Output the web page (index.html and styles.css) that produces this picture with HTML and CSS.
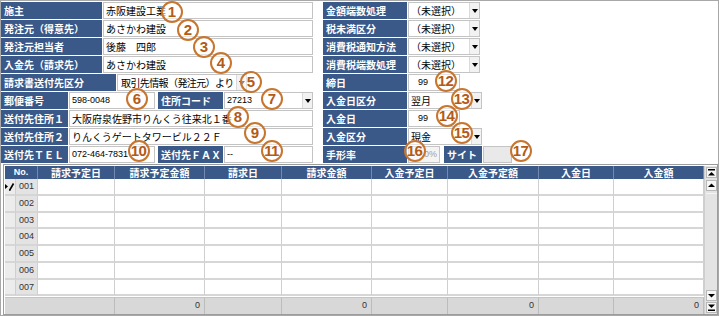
FILE: index.html
```html
<!DOCTYPE html>
<html lang="ja">
<head>
    <meta charset="UTF-8">
    <title>請求先情報</title>
    <link rel="stylesheet" href="styles.css">
</head>
<body>
    <div class="frame">
        <div class="form">
            <div class="col col-left">
                <div class="row">
                    <div class="lbl w101">施主</div>
                    <div class="fld w210">赤阪建設工業</div>
                </div>
                <div class="row">
                    <div class="lbl w101">発注元（得意先）</div>
                    <div class="fld w210">あさかわ建設</div>
                </div>
                <div class="row">
                    <div class="lbl w101">発注元担当者</div>
                    <div class="fld w210">後藤　四郎</div>
                </div>
                <div class="row">
                    <div class="lbl w101">入金先（請求先）</div>
                    <div class="fld w210">あさかわ建設</div>
                </div>
                <div class="row">
                    <div class="lbl w115">請求書送付先区分</div>
                    <div class="fld sel w130 pl3"><span class="val tight">取引先情報（発注元）より</span><span class="arr"></span></div>
                </div>
                <div class="row">
                    <div class="lbl w67">郵便番号</div>
                    <div class="fld num w86">598-0048</div>
                    <div class="lbl w65 ml2">住所コード</div>
                    <div class="fld sel num w89"><span class="val">27213</span><span class="arr"></span></div>
                </div>
                <div class="row">
                    <div class="lbl w67">送付先住所１</div>
                    <div class="fld w244">大阪府泉佐野市りんくう往来北１番</div>
                </div>
                <div class="row">
                    <div class="lbl w67">送付先住所２</div>
                    <div class="fld w244">りんくうゲートタワービル２２Ｆ</div>
                </div>
                <div class="row">
                    <div class="lbl w67">送付先ＴＥＬ</div>
                    <div class="fld num w86">072-464-7831</div>
                    <div class="lbl w65 ml2">送付先ＦＡＸ</div>
                    <div class="fld num w89">--</div>
                </div>
            </div>

            <div class="col col-right">
                <div class="row">
                    <div class="lbl w84">金額端数処理</div>
                    <div class="fld sel w72"><span class="val">（未選択）</span><span class="arr"></span></div>
                </div>
                <div class="row">
                    <div class="lbl w84">税未満区分</div>
                    <div class="fld sel w72"><span class="val">（未選択）</span><span class="arr"></span></div>
                </div>
                <div class="row">
                    <div class="lbl w84">消費税通知方法</div>
                    <div class="fld sel w72"><span class="val">（未選択）</span><span class="arr"></span></div>
                </div>
                <div class="row">
                    <div class="lbl w84">消費税端数処理</div>
                    <div class="fld sel w72"><span class="val">（未選択）</span><span class="arr"></span></div>
                </div>
                <div class="row">
                    <div class="lbl w84">締日</div>
                    <div class="fld num pl9 w52">99</div>
                </div>
                <div class="row">
                    <div class="lbl w84">入金日区分</div>
                    <div class="fld sel w74"><span class="val">翌月</span><span class="arr"></span></div>
                </div>
                <div class="row">
                    <div class="lbl w84">入金日</div>
                    <div class="fld num pl9 w52">99</div>
                </div>
                <div class="row">
                    <div class="lbl w84">入金区分</div>
                    <div class="fld sel w74"><span class="val">現金</span><span class="arr"></span></div>
                </div>
                <div class="row">
                    <div class="lbl w84">手形率</div>
                    <div class="fld num rate w32">0%</div>
                    <div class="lbl w38 ml3">サイト</div>
                    <div class="fld grey w29"></div>
                </div>
            </div>
        </div>

        <div class="grid">
            <div class="table">
                <div class="thead">
                    <div>No.</div>
                    <div>請求予定日</div>
                    <div>請求予定金額</div>
                    <div>請求日</div>
                    <div>請求金額</div>
                    <div>入金予定日</div>
                    <div>入金予定額</div>
                    <div>入金日</div>
                    <div>入金額</div>
                </div>
                <div class="tr">
                    <div class="ind">
                        <svg width="10" height="11" viewBox="0 0 10 11">
                            <path d="M0 3 L3 5.5 L0 8 Z" fill="#000"/>
                            <path d="M4.5 9.5 L8.5 2.5" stroke="#000" stroke-width="1.6"/>
                            <path d="M4 10 L4.3 8.4 L5.4 9.1 Z" fill="#000"/>
                        </svg>
                    </div>
                    <div class="no">001</div><div></div><div></div><div></div><div></div><div></div><div></div><div></div><div></div>
                </div>
                <div class="tr">
                    <div class="ind"></div><div class="no">002</div><div></div><div></div><div></div><div></div><div></div><div></div><div></div><div></div>
                </div>
                <div class="tr">
                    <div class="ind"></div><div class="no">003</div><div></div><div></div><div></div><div></div><div></div><div></div><div></div><div></div>
                </div>
                <div class="tr">
                    <div class="ind"></div><div class="no">004</div><div></div><div></div><div></div><div></div><div></div><div></div><div></div><div></div>
                </div>
                <div class="tr">
                    <div class="ind"></div><div class="no">005</div><div></div><div></div><div></div><div></div><div></div><div></div><div></div><div></div>
                </div>
                <div class="tr">
                    <div class="ind"></div><div class="no">006</div><div></div><div></div><div></div><div></div><div></div><div></div><div></div><div></div>
                </div>
                <div class="tr">
                    <div class="ind"></div><div class="no">007</div><div></div><div></div><div></div><div></div><div></div><div></div><div></div><div></div>
                </div>
                <div class="tfoot">
                    <div></div>
                    <div>0</div>
                    <div></div>
                    <div>0</div>
                    <div></div>
                    <div>0</div>
                    <div></div>
                    <div>0</div>
                </div>
            </div>
            <div class="vscroll">
                <div class="sb">
                    <svg width="7" height="7" viewBox="0 0 7 7"><rect x="0" y="0" width="7" height="1.5" fill="#000"/><path d="M0 6.5 L7 6.5 L3.5 3 Z" fill="#000"/></svg>
                </div>
                <div class="sb up">
                    <svg width="7" height="5" viewBox="0 0 7 5"><path d="M0 4 L7 4 L3.5 0.5 Z" fill="#000"/></svg>
                </div>
                <div class="track"></div>
                <div class="sb">
                    <svg width="7" height="5" viewBox="0 0 7 5"><path d="M0 1 L7 1 L3.5 4.5 Z" fill="#000"/></svg>
                </div>
                <div class="sb last">
                    <svg width="7" height="7" viewBox="0 0 7 7"><path d="M0 0.5 L7 0.5 L3.5 4 Z" fill="#000"/><rect x="0" y="5.5" width="7" height="1.5" fill="#000"/></svg>
                </div>
            </div>
        </div>

        <span class="mark m1">1</span>
        <span class="mark m2">2</span>
        <span class="mark m3">3</span>
        <span class="mark m4">4</span>
        <span class="mark m5">5</span>
        <span class="mark m6">6</span>
        <span class="mark m7">7</span>
        <span class="mark m8">8</span>
        <span class="mark m9">9</span>
        <span class="mark two m10">10</span>
        <span class="mark two m11">11</span>
        <span class="mark two m12">12</span>
        <span class="mark two m13">13</span>
        <span class="mark two m14">14</span>
        <span class="mark two m15">15</span>
        <span class="mark two m16">16</span>
        <span class="mark two m17">17</span>
    </div>
</body>
</html>
```

FILE: styles.css
```css
body {
    margin: 0;
    background: #fff;
    font-family: "Noto Sans CJK JP", sans-serif;
    font-size: 10px;
    color: #000;
}
.frame {
    position: relative;
    width: 719px;
    height: 316px;
    box-sizing: border-box;
    border: 1px solid #a8a8a8;
    overflow: hidden;
}

/* upper form */
.form {
    display: flex;
    gap: 10px;
    padding-top: 1px;
}
.col {
    display: flex;
    flex-direction: column;
    gap: 1px;
}
.col-left {
    width: 312px;
}
.row {
    display: flex;
    gap: 1px;
    height: 17px;
}
.lbl {
    box-sizing: border-box;
    background: #3a5888;
    color: #fff;
    font-weight: bold;
    line-height: 17px;
    padding-left: 3px;
    white-space: nowrap;
    overflow: hidden;
}
.fld {
    display: flex;
    box-sizing: border-box;
    border: 1px solid #c4c4c4;
    background: #fff;
    line-height: 15px;
    padding-left: 2px;
    white-space: nowrap;
    overflow: hidden;
}
.num {
    font-family: "Liberation Sans", "Noto Sans CJK JP", sans-serif;
    font-size: 9px;
}
.sel .val {
    flex: 1;
    overflow: hidden;
}
.tight {
    letter-spacing: -0.6px;
}
.arr {
    width: 9px;
    display: flex;
    align-items: center;
    justify-content: center;
    background: #f2f2f2;
    border-left: 1px solid #dadada;
}
.arr::before {
    content: "";
    border-left: 3px solid transparent;
    border-right: 3px solid transparent;
    border-top: 4px solid #000;
}
.rate {
    justify-content: flex-end;
    padding-right: 2px;
    color: #a0a0a0;
    background: #f4f4f4;
}
.grey {
    background: #e9e9e9;
}
.pl3 { padding-left: 3px; }
.pl9 { padding-left: 9px; }
.ml2 { margin-left: 2px; }
.ml3 { margin-left: 3px; }

.w29 { width: 29px; }
.w32 { width: 32px; }
.w38 { width: 38px; }
.w52 { width: 52px; }
.w65 { width: 65px; }
.w67 { width: 67px; }
.w72 { width: 72px; }
.w74 { width: 74px; }
.w84 { width: 84px; }
.w86 { width: 86px; }
.w89 { width: 89px; }
.w101 { width: 101px; }
.w115 { width: 115px; }
.w130 { width: 130px; }
.w210 { width: 210px; }
.w244 { width: 244px; }

/* detail grid */
.grid {
    display: flex;
    margin: 1px 0 0 2px;
    width: 715px;
    height: 151px;
    box-sizing: border-box;
    border: 1px solid #9c9c9c;
    padding: 1px 0 0 1px;
}
.table {
    width: 699px;
    display: flex;
    flex-direction: column;
}
.thead {
    display: grid;
    grid-template-columns: 33px 77px 90px 77px 90px 76px 91px 75px 90px;
    height: 13px;
    background: #3a5888;
}
.thead div {
    box-sizing: border-box;
    border-right: 1px solid #7389ad;
    color: #fff;
    font-weight: bold;
    text-align: center;
    line-height: 13px;
}
.thead div:first-child {
    font-family: "Liberation Sans", sans-serif;
    font-size: 9px;
}
.tr {
    display: grid;
    grid-template-columns: 11px 22px 77px 90px 77px 90px 76px 91px 75px 90px;
    height: 17px;
}
.tr div {
    box-sizing: border-box;
    background: #fff;
    border-right: 1px solid #cfcfcf;
    border-bottom: 2px solid #d6d6d6;
}
.tr .ind {
    background: #ececec;
    display: flex;
    align-items: center;
}
.tr .no {
    background: #e3e3e3;
    font-family: "Liberation Sans", sans-serif;
    font-size: 9px;
    line-height: 14px;
    padding-left: 3px;
    color: #333;
}
.tfoot {
    display: grid;
    grid-template-columns: 110px 90px 77px 90px 76px 91px 75px 90px;
    height: 16px;
    margin-top: 1px;
    background: #d8d8d8;
    border-top: 1px solid #c4c4c4;
}
.tfoot div {
    box-sizing: border-box;
    border-right: 1px solid #bcbcbc;
    text-align: right;
    padding-right: 4px;
    font-family: "Liberation Sans", sans-serif;
    font-size: 9px;
    line-height: 15px;
    color: #333;
}
.vscroll {
    width: 13px;
    display: flex;
    flex-direction: column;
    background: #e3e3e3;
    border-left: 1px solid #cfcfcf;
    box-sizing: border-box;
    padding: 1px 0 1px 1px;
}
.sb {
    height: 11px;
    box-sizing: border-box;
    background: #f6f6f6;
    border: 1px solid #b8b8b8;
    display: flex;
    align-items: center;
    justify-content: center;
}
.sb.up {
    margin-top: 2px;
}
.sb.last {
    margin-top: 1px;
}
.track {
    flex: 1;
    border-top: 1px solid #f4f4f4;
    margin-top: 2px;
}

/* numbered callouts */
.mark {
    position: absolute;
    width: 22px;
    height: 22px;
    box-sizing: border-box;
    border: 2px solid #c8752e;
    border-radius: 50%;
    background: rgba(255, 255, 255, 0.55);
    color: #b45a16;
    font: bold 15px/18px "Liberation Sans", sans-serif;
    text-align: center;
}
.mark.two {
    letter-spacing: -0.6px;
    text-indent: -1px;
}
.m1 { left: 160px; top: 0; }
.m2 { left: 176px; top: 18px; }
.m3 { left: 192px; top: 35px; }
.m4 { left: 209px; top: 51px; }
.m5 { left: 239px; top: 70px; }
.m6 { left: 125px; top: 87px; }
.m7 { left: 260px; top: 87px; }
.m8 { left: 226px; top: 105px; }
.m9 { left: 243px; top: 121px; }
.m10 { left: 127px; top: 139px; }
.m11 { left: 260px; top: 139px; }
.m12 { left: 434px; top: 69px; }
.m13 { left: 450px; top: 87px; }
.m14 { left: 435px; top: 104px; }
.m15 { left: 450px; top: 121px; }
.m16 { left: 403px; top: 139px; }
.m17 { left: 509px; top: 139px; }
```
